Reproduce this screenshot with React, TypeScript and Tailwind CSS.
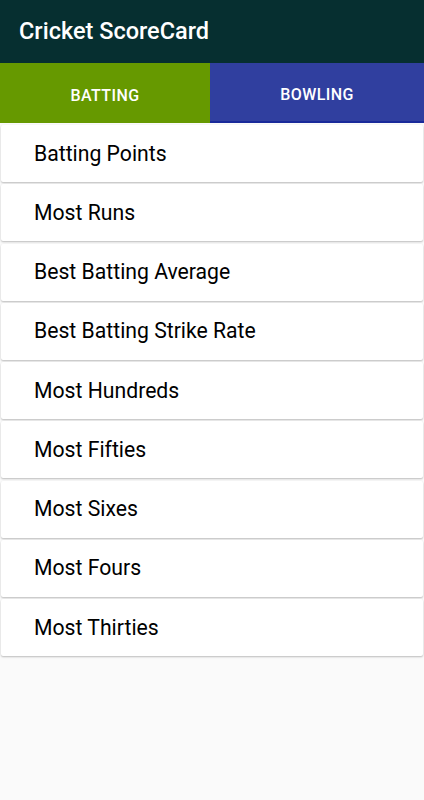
const items = [
  "Batting Points",
  "Most Runs",
  "Best Batting Average",
  "Best Batting Strike Rate",
  "Most Hundreds",
  "Most Fifties",
  "Most Sixes",
  "Most Fours",
  "Most Thirties",
];

export default function App() {
  return (
    <div className="min-h-[800px] bg-[#fafafa] font-['Roboto',sans-serif]">
      {/* Toolbar */}
      <div className="h-[63px] bg-[#062f30] flex items-center px-[19px] shadow-md">
        <h1 className="text-white text-[23.5px] font-medium">Cricket ScoreCard</h1>
      </div>

      {/* Tabs */}
      <div className="flex h-[60px]">
        <button className="w-[210px] pt-[6px] bg-[#669900] text-white text-[16px] tracking-[0.4px] font-medium uppercase">Batting</button>
        <button className="flex-1 pt-[6px] bg-[#303f9f] text-white text-[16px] tracking-[0.4px] font-medium uppercase border-b-2 border-[#1a2a9a]">Bowling</button>
      </div>

      {/* List */}
      <div className="flex flex-col gap-[2.25px] px-[1px] pt-[2px]">
        {items.map((item) => (
          <div
            key={item}
            className="h-[57px] bg-white rounded-[2px] shadow-[0_1px_2px_rgba(0,0,0,0.25)] flex items-center pl-[33px]"
          >
            <span className="text-black text-[21.2px]">{item}</span>
          </div>
        ))}
      </div>
    </div>
  );
}
